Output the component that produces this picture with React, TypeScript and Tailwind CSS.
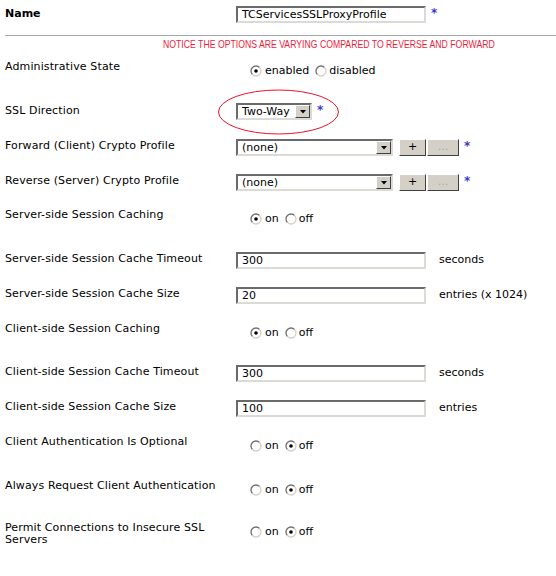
import React from "react";

const FONT = { fontFamily: '"DejaVu Sans", Verdana, sans-serif' };

function Radio({ checked }: { checked?: boolean }) {
  return (
    <svg width="12" height="12" viewBox="0 0 12 12" className="shrink-0">
      <circle cx="6" cy="6" r="5" fill="#fff" />
      <path d="M2.46 9.54 A5 5 0 0 1 9.54 2.46" fill="none" stroke="#6e6e6e" strokeWidth="1.3" />
      <path d="M9.54 2.46 A5 5 0 0 1 2.46 9.54" fill="none" stroke="#d4d0c8" strokeWidth="1.3" />
      {checked && <circle cx="6" cy="6" r="1.8" fill="#000" />}
    </svg>
  );
}

function RadioPair({ a, b, first }: { a: string; b: string; first: boolean }) {
  return (
    <div className="mt-[6px] flex items-center pl-[14px] text-[11px] leading-[12px]">
      <Radio checked={first} />
      <span className="ml-[3px] mr-[6px]">{a}</span>
      <Radio checked={!first} />
      <span className="ml-[2px]">{b}</span>
    </div>
  );
}

function Asterisk() {
  return <span className="ml-[5px] mt-px text-[12px] font-bold leading-[12px] text-[#3a3ad0]">*</span>;
}

function TextBox({ value, w = "w-[190px]" }: { value: string; w?: string }) {
  return (
    <div
      className={`${w} h-[17px] border-2 border-t-[#6a6a6a] border-l-[#6a6a6a] border-r-[#dcdad4] border-b-[#dcdad4] bg-white pl-[4px] text-[11px] leading-[13px]`}
    >
      {value}
    </div>
  );
}

function DropBtn() {
  return (
    <span className="flex h-[13px] w-[15px] items-center justify-center border border-t-white border-l-white border-r-[#404040] border-b-[#404040] bg-[#d4d0c8]">
      <svg width="6" height="4" viewBox="0 0 6 4">
        <path d="M0 0 H6 L3 3.5 Z" fill="#000" />
      </svg>
    </span>
  );
}

function Select({ value, w }: { value: string; w: string }) {
  return (
    <div
      className={`${w} flex h-[17px] items-center justify-between border-2 border-t-[#6a6a6a] border-l-[#6a6a6a] border-r-[#dcdad4] border-b-[#dcdad4] bg-white pl-[4px] text-[11px] leading-[13px]`}
    >
      <span>{value}</span>
      <DropBtn />
    </div>
  );
}

function Btn({ label, disabled, w }: { label: string; disabled?: boolean; w: string }) {
  return (
    <span
      className={`${w} flex h-[17px] items-center justify-center border border-t-white border-l-white border-r-[#404040] border-b-[#404040] bg-[#d4d0c8] text-[11px] ${
        disabled ? "text-[#a8a8a8]" : "text-black"
      }`}
    >
      {label}
    </span>
  );
}

function Row({ label, h, children }: { label: React.ReactNode; h: string; children: React.ReactNode }) {
  return (
    <div className={`flex ${h}`}>
      <div className="w-[236px] shrink-0 pl-[5px] pr-[12px] pt-[2px] text-[11px] leading-[12px] tracking-[0.12px]">
        {label}
      </div>
      <div className="flex-1">{children}</div>
    </div>
  );
}

function ProfileRow({ label, h }: { label: string; h: string }) {
  return (
    <Row label={label} h={h}>
      <div className="mt-px flex items-start">
        <Select value="(none)" w="w-[157px]" />
        <div className="ml-[6px] flex gap-px">
          <Btn label="+" w="w-[27px]" />
          <Btn label="..." disabled w="w-[32px]" />
        </div>
        <Asterisk />
      </div>
    </Row>
  );
}

function InputRow({ label, value, unit, h }: { label: string; value: string; unit: string; h: string }) {
  return (
    <Row label={label} h={h}>
      <div className="mt-px flex items-center">
        <TextBox value={value} />
        <span className="ml-[13px] text-[11px]">{unit}</span>
      </div>
    </Row>
  );
}

export default function App() {
  return (
    <div className="relative h-[576px] w-[556px] overflow-hidden bg-white pt-px text-black" style={FONT}>
      <div className="flex h-[34px] pt-[5px]">
        <div className="w-[236px] pl-[5px] pt-[2px] text-[11px] font-bold leading-[12px]">Name</div>
        <div className="flex items-start">
          <TextBox value="TCServicesSSLProxyProfile" />
          <Asterisk />
        </div>
      </div>
      <div className="ml-[5px] border-t border-[#a8a8a8]" />
      <div className="flex h-[23px] pl-[163px] pt-[2px] text-[11px] leading-[12px]">
        <span
          className="inline-block origin-left scale-x-[0.79] whitespace-nowrap text-[#ee1c3a]"
          style={{ fontFamily: '"Liberation Sans", Arial, sans-serif' }}
        >
          NOTICE THE OPTIONS ARE VARYING COMPARED TO REVERSE AND FORWARD
        </span>
      </div>

      <Row label="Administrative State" h="h-[44px]">
        <RadioPair a="enabled" b="disabled" first />
      </Row>
      <Row label="SSL Direction" h="h-[35px]">
        <div className="flex items-start">
          <Select value="Two-Way" w="w-[76px]" />
          <Asterisk />
        </div>
      </Row>
      <ProfileRow label="Forward (Client) Crypto Profile" h="h-[35px]" />
      <ProfileRow label="Reverse (Server) Crypto Profile" h="h-[34px]" />
      <Row label="Server-side Session Caching" h="h-[44px]">
        <RadioPair a="on" b="off" first />
      </Row>
      <InputRow label="Server-side Session Cache Timeout" value="300" unit="seconds" h="h-[35px]" />
      <InputRow label="Server-side Session Cache Size" value="20" unit="entries (x 1024)" h="h-[35px]" />
      <Row label="Client-side Session Caching" h="h-[43px]">
        <RadioPair a="on" b="off" first />
      </Row>
      <InputRow label="Client-side Session Cache Timeout" value="300" unit="seconds" h="h-[35px]" />
      <InputRow label="Client-side Session Cache Size" value="100" unit="entries" h="h-[35px]" />
      <Row label="Client Authentication Is Optional" h="h-[44px]">
        <RadioPair a="on" b="off" first={false} />
      </Row>
      <Row label="Always Request Client Authentication" h="h-[42px]">
        <RadioPair a="on" b="off" first={false} />
      </Row>
      <Row label="Permit Connections to Insecure SSL Servers" h="h-[56px]">
        <RadioPair a="on" b="off" first={false} />
      </Row>

      <svg className="pointer-events-none absolute left-[217px] top-[89px]" width="123" height="46">
        <ellipse cx="61.5" cy="23" rx="60" ry="22" fill="none" stroke="#e8132b" strokeWidth="1" />
      </svg>
    </div>
  );
}
